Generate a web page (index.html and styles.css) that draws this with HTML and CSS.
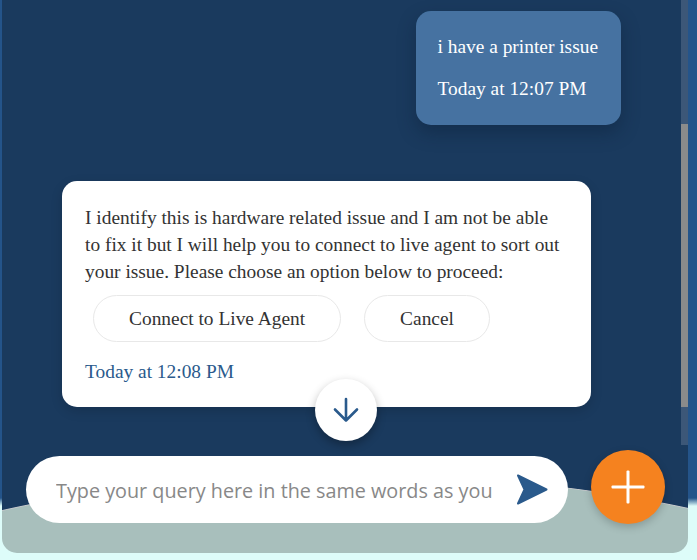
FILE: index.html
```html
<!DOCTYPE html>
<html lang="en">
<head>
  <meta charset="UTF-8" />
  <meta name="viewport" content="width=device-width, initial-scale=1.0"/>
  <title>Support Chat</title>
  <link rel="stylesheet" href="styles.css">
</head>
<body>
  <div class="panel">
    <div class="top">
      <div class="messages">
        <div class="bubble user">
          <p class="text">i have a printer issue</p>
          <p class="time">Today at 12:07 PM</p>
        </div>

        <div class="bubble bot">
          <p class="text">I identify this is hardware related issue and I am not be able to fix it but I will help you to connect to live agent to sort out your issue. Please choose an option below to proceed:</p>
          <div class="options">
            <button type="button" class="option">Connect to Live Agent</button>
            <button type="button" class="option">Cancel</button>
          </div>
          <p class="time">Today at 12:08 PM</p>
        </div>

        <!-- jump to latest message -->
        <button type="button" class="scroll-down" aria-label="Scroll down">
          <svg width="26" height="26" viewBox="0 0 26 26">
            <path d="M13 2 V23.5 M2 12.5 L13 23.5 L24 12.5" fill="none" stroke="#2a5a8c" stroke-width="2.6" stroke-linecap="round" stroke-linejoin="round"/>
          </svg>
        </button>
      </div>
      <div class="scrollbar"><div class="thumb"></div></div>
    </div>

    <div class="composer">
      <div class="query">
        <input type="text" placeholder="Type your query here in the same words as you" />
        <button type="button" class="send" aria-label="Send">
          <svg width="32" height="31" viewBox="0 0 32 31">
            <path d="M2 1.5 L30.5 15.5 L2 29.5 L8.5 15.5 Z" fill="#2a5a8c" stroke="#2a5a8c" stroke-width="2" stroke-linejoin="round"/>
          </svg>
        </button>
      </div>
      <button type="button" class="add" aria-label="More"></button>
    </div>
  </div>
</body>
</html>
```

FILE: styles.css
```css
body {
  margin: 0;
  height: 560px;
  background: linear-gradient(#24548a 0, #24548a 498px, #ddfcf9 506px);
  font-family: "Liberation Serif", "Times New Roman", serif;
}

.panel {
  margin-left: 2px;
  width: 686px;
  height: 553px;
  border-radius: 0 0 15px 15px;
  overflow: hidden;
  background:
    radial-gradient(650px 229px at 348px 703px, #a8bfbc 99.3%, rgba(214, 214, 214, 0.9) 99.65%, rgba(26, 58, 94, 0) 100%),
    #1a3a5e;
  display: flex;
  flex-direction: column;
}

.top {
  height: 445px;
  display: flex;
}

.messages {
  flex: 1;
  position: relative;
  display: flex;
  flex-direction: column;
  padding: 11px 60px 0 60px;
}

.scrollbar {
  width: 7px;
  background: #3c5778;
}

.thumb {
  margin-top: 124px;
  height: 283px;
  background: #8b8b8b;
}

.bubble {
  border-radius: 15px;
  font-size: 19.4px;
  line-height: 27px;
}

.bubble p {
  margin: 0;
}

.user {
  align-self: flex-end;
  background: #4672a1;
  color: white;
  padding: 22px 23px 23px 22px;
  box-shadow: 0 8px 18px rgba(10, 25, 45, 0.35);
}

.user .time {
  margin-top: 15px;
}

.bot {
  margin-top: 56px;
  width: 529px;
  box-sizing: border-box;
  background: white;
  color: #333;
  padding: 23px 30px 22px 23px;
  box-shadow: 0 4px 12px rgba(0, 0, 0, 0.15);
}

.bot .time {
  margin-top: 16px;
  color: #2a5a8c;
}

.options {
  display: flex;
  gap: 23px;
  margin: 10px 0 0 8px;
}

.option {
  height: 47px;
  padding: 0 35px;
  border: 1px solid #e8e8e8;
  border-radius: 24px;
  background: white;
  color: #333;
  font-family: inherit;
  font-size: 19.4px;
  cursor: pointer;
}

.scroll-down {
  position: absolute;
  left: 313px;
  top: 379px;
  width: 62px;
  height: 62px;
  border: none;
  border-radius: 50%;
  background: white;
  box-shadow: 0 4px 10px rgba(0, 0, 0, 0.3);
  display: flex;
  align-items: center;
  justify-content: center;
  padding: 0;
  cursor: pointer;
}

.composer {
  display: flex;
  gap: 23px;
  padding: 5px 0 0 24px;
}

.query {
  margin-top: 6px;
  width: 542px;
  height: 67px;
  box-sizing: border-box;
  background: white;
  border-radius: 34px;
  display: flex;
  align-items: center;
  padding: 2px 20px 0 30px;
}

.query input {
  flex: 1;
  min-width: 0;
  border: none;
  outline: none;
  background: transparent;
  font-family: "Open Sans", sans-serif;
  font-size: 19.8px;
  color: #333;
  padding: 0;
}

.query input::placeholder {
  color: #888;
}

.send {
  margin: -2px 0 0 22px;
  border: none;
  background: none;
  padding: 0;
  display: flex;
  cursor: pointer;
}

.add {
  width: 74px;
  height: 74px;
  border: none;
  border-radius: 50%;
  background: #f5821f;
  position: relative;
  cursor: pointer;
  box-shadow: 0 3px 8px rgba(0, 0, 0, 0.2);
}

/* the plus sign */
.add::before,
.add::after {
  content: "";
  position: absolute;
  left: 50%;
  top: 50%;
  background: white;
  border-radius: 1px;
  transform: translate(-50%, -50%);
}

.add::before {
  width: 33px;
  height: 3px;
}

.add::after {
  width: 3px;
  height: 33px;
}
```
